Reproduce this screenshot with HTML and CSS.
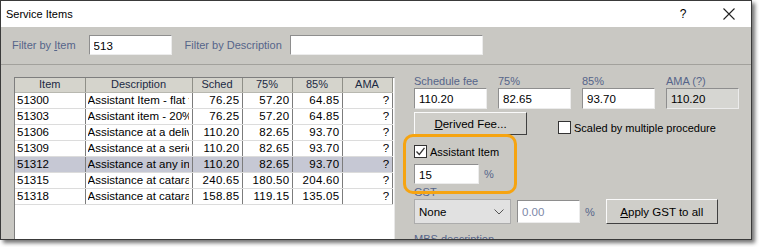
FILE: index.html
```html
<html>
  <head>
    <title>Service Items</title>
    <link rel="stylesheet" href="styles.css">
  </head>
  <body>
    <div class="window">
      <div class="titlebar">
        <span class="title">Service Items</span>
        <span class="help">?</span>
        <span class="close">
          <svg width="12" height="12" viewBox="0 0 12 12"><path d="M0.5 0.5 L11.5 11.5 M11.5 0.5 L0.5 11.5" stroke="#222" stroke-width="1.1" fill="none"/></svg>
        </span>
      </div>
      <div class="content">
        <div class="filters">
          <span class="label">Filter by <u>I</u>tem</span>
          <input class="field item-filter" value="513">
          <span class="label desc-label">Filter by Description</span>
          <input class="field desc-filter" value="">
        </div>
        <div class="main">
          <div class="grid">
            <table>
              <colgroup>
                <col class="c-item"><col class="c-desc"><col class="c-num"><col class="c-num75"><col class="c-num"><col class="c-num">
              </colgroup>
              <thead>
                <tr><th>Item</th><th>Description</th><th>Sched</th><th>75%</th><th>85%</th><th>AMA</th></tr>
              </thead>
              <tbody>
                <tr><td>51300</td><td><div class="clip">Assistant Item - flat fee</div></td><td class="num">76.25</td><td class="num">57.20</td><td class="num">64.85</td><td class="num">?</td></tr>
                <tr><td>51303</td><td><div class="clip">Assistant item - 20% of</div></td><td class="num">76.25</td><td class="num">57.20</td><td class="num">64.85</td><td class="num">?</td></tr>
                <tr><td>51306</td><td><div class="clip">Assistance at a delivery</div></td><td class="num">110.20</td><td class="num">82.65</td><td class="num">93.70</td><td class="num">?</td></tr>
                <tr><td>51309</td><td><div class="clip">Assistance at a series</div></td><td class="num">110.20</td><td class="num">82.65</td><td class="num">93.70</td><td class="num">?</td></tr>
                <tr class="selected"><td>51312</td><td><div class="clip">Assistance at any interval</div></td><td class="num">110.20</td><td class="num">82.65</td><td class="num">93.70</td><td class="num">?</td></tr>
                <tr><td>51315</td><td><div class="clip">Assistance at cataract</div></td><td class="num">240.65</td><td class="num">180.50</td><td class="num">204.60</td><td class="num">?</td></tr>
                <tr><td>51318</td><td><div class="clip">Assistance at cataract</div></td><td class="num">158.85</td><td class="num">119.15</td><td class="num">135.05</td><td class="num">?</td></tr>
              </tbody>
            </table>
          </div>

          <div class="details">
            <div class="fees">
              <div class="fee">
                <span class="label">Schedule fee</span>
                <input class="field" value="110.20">
              </div>
              <div class="fee">
                <span class="label">75%</span>
                <input class="field" value="82.65">
              </div>
              <div class="fee">
                <span class="label">85%</span>
                <input class="field" value="93.70">
              </div>
              <div class="fee">
                <span class="label">AMA (?)</span>
                <input class="field readonly" value="110.20">
              </div>
            </div>

            <div class="derived-row">
              <button class="btn derived"><u>D</u>erived Fee...</button>
              <label class="check scaled"><span class="box"></span>Scaled by multiple procedure</label>
            </div>

            <label class="check assistant"><span class="box checked">
              <svg width="11" height="11" viewBox="0 0 11 11"><path d="M1.5 5.5 L4.3 8.5 L9.5 1.8" stroke="#333" stroke-width="1.3" fill="none"/></svg>
            </span>Assistant Item</label>
            <div class="percent-row">
              <input class="field pct" value="15">
              <span class="label">%</span>
            </div>

            <span class="label gst-label">GST</span>
            <div class="gst-row">
              <div class="select">None
                <svg width="10" height="6" viewBox="0 0 10 6"><path d="M0.5 0.5 L5 5 L9.5 0.5" stroke="#555" stroke-width="1" fill="none"/></svg>
              </div>
              <input class="field gst-rate" value="0.00" disabled>
              <span class="label">%</span>
              <button class="btn apply"><u>A</u>pply GST to all</button>
            </div>

            <span class="label mbs-label">MBS description</span>

            <!-- highlight drawn over the assistant fields -->
            <div class="highlight"></div>
          </div>
        </div>
      </div>
    </div>
  </body>
</html>
```

FILE: styles.css
```css
body {
  margin: 0;
  background: #fff;
  font-family: "Liberation Sans", Arial, sans-serif;
  font-size: 11px;
  color: #000;
}

.window {
  width: 752px;
  height: 240px;
  box-sizing: border-box;
  border: 1px solid #3a3a3a;
  box-shadow: 3px 3px 4px rgba(0, 0, 0, 0.55);
  display: flex;
  flex-direction: column;
  overflow: hidden;
}

/* Title bar */
.titlebar {
  height: 26px;
  flex: none;
  background: #fff;
  display: flex;
  align-items: center;
  padding-left: 5px;
}
.title {
  font-size: 11px;
  flex: 1;
}
.help {
  font-size: 12px;
  width: 12px;
  text-align: center;
}
.close {
  width: 12px;
  height: 12px;
  margin: 0 16px 0 34px;
  display: flex;
}

/* Gray body */
.content {
  flex: 1;
  background: #c9c8c3;
  overflow: hidden;
}

.label {
  color: #56658a;
}

.field {
  box-sizing: border-box;
  height: 21px;
  border: 1px solid;
  border-color: #8e8e8e #ececec #ececec #8e8e8e;
  background: #fff;
  font-family: inherit;
  font-size: 11.5px;
  padding: 1px 4px 0;
  color: #000;
  outline: none;
}
.field.readonly {
  background: #d6d6d2;
}

.filters {
  display: flex;
  align-items: center;
  padding: 8px 0 0 11px;
  height: 20px;
}
.filters .label {
  font-size: 11px;
  margin-right: 13px;
}
.filters .desc-label {
  margin-right: 8px;
}
.item-filter {
  width: 83px;
  height: 20px;
  margin-right: 13px;
}
.desc-filter {
  width: 193px;
  height: 20px;
}

.main {
  display: flex;
  align-items: flex-start;
  border-top: 1px solid #a2a19c;
  margin-top: 9px;
  padding: 12px 0 0 13px;
}

/* Item list */
.grid {
  width: 381px;
  height: 200px;
  flex: none;
  box-sizing: border-box;
  background: #fff;
  border: 1px solid #7e7e7e;
  border-right-color: #e8e8e8;
}
.grid table {
  table-layout: fixed;
  border-collapse: collapse;
  width: 377px;
  font-family: "Liberation Sans", Arial, sans-serif;
  font-size: 11px;
}
.c-item { width: 70px; }
.c-desc { width: 107px; }
.c-num { width: 50px; }
.c-num75 { width: 50px; }
.grid th {
  height: 14px;
  padding: 0;
  background: #d5d4cc;
  font-weight: normal;
  font-size: 11px;
  color: #1c2a44;
  border-right: 1px solid #8f8f87;
  border-bottom: 1px solid #b8b8b0;
  line-height: 13px;
}
.grid td {
  height: 15px;
  padding: 0 2px;
  border-right: 1px solid #7c7c7c;
  border-bottom: 1px solid #dcdcdc;
  white-space: nowrap;
  line-height: 15px;
  font-size: 11.5px;
}
.grid .clip {
  width: 101px;
  overflow: hidden;
}
.grid td.num {
  text-align: right;
  letter-spacing: 0.3px;
}
.grid tr.selected td {
  background: #c6c8d4;
}

/* Right hand panel */
.details {
  position: relative;
  margin-left: 19px;
  margin-top: -2px;
  display: flex;
  flex-direction: column;
  align-items: flex-start;
}
.details .label {
  font-size: 11px;
  line-height: 12px;
}

.fees {
  display: flex;
  gap: 11px;
}
.fee {
  display: flex;
  flex-direction: column;
  gap: 1px;
}
.fee .field {
  width: 73px;
}

.btn {
  box-sizing: border-box;
  font-family: inherit;
  font-size: 11.5px;
  color: #000;
  background: #cfcec9;
  border: 1px solid;
  border-color: #fafafa #404040 #404040 #fafafa;
  padding: 0;
}

.derived-row {
  display: flex;
  align-items: flex-end;
  margin-top: 3px;
}
.derived {
  width: 113px;
  height: 23px;
}

.check {
  display: flex;
  align-items: center;
  font-size: 11px;
}
.box {
  box-sizing: border-box;
  width: 13px;
  height: 13px;
  border: 1px solid #333;
  background: #fff;
  margin-right: 3px;
  display: flex;
  align-items: center;
  justify-content: center;
}
.scaled {
  margin: 0 0 1px 31px;
}
.assistant {
  margin-top: 10px;
}

.percent-row {
  display: flex;
  align-items: center;
  gap: 5px;
  margin-top: 6px;
}
.pct {
  width: 65px;
  height: 20px;
}

.gst-label {
  margin-top: 2px;
}
.gst-row {
  display: flex;
  align-items: center;
  margin-top: 1px;
}
.select {
  box-sizing: border-box;
  width: 97px;
  height: 25px;
  background: #e1e1e1;
  border: 1px solid #acacac;
  font-size: 11.5px;
  display: flex;
  align-items: center;
  justify-content: space-between;
  padding: 0 6px 0 4px;
}
.gst-rate {
  width: 63px;
  height: 23px;
  margin-left: 6px;
  background: #fff;
  color: #7d88a8;
}
.gst-row .label {
  margin-left: 5px;
}
.apply {
  width: 112px;
  height: 25px;
  margin-left: 11px;
}
.mbs-label {
  margin-top: 9px;
}

.highlight {
  position: absolute;
  left: -11px;
  top: 59px;
  width: 114px;
  height: 60px;
  box-sizing: border-box;
  border: 3px solid #f6a411;
  border-radius: 10px;
}
```
